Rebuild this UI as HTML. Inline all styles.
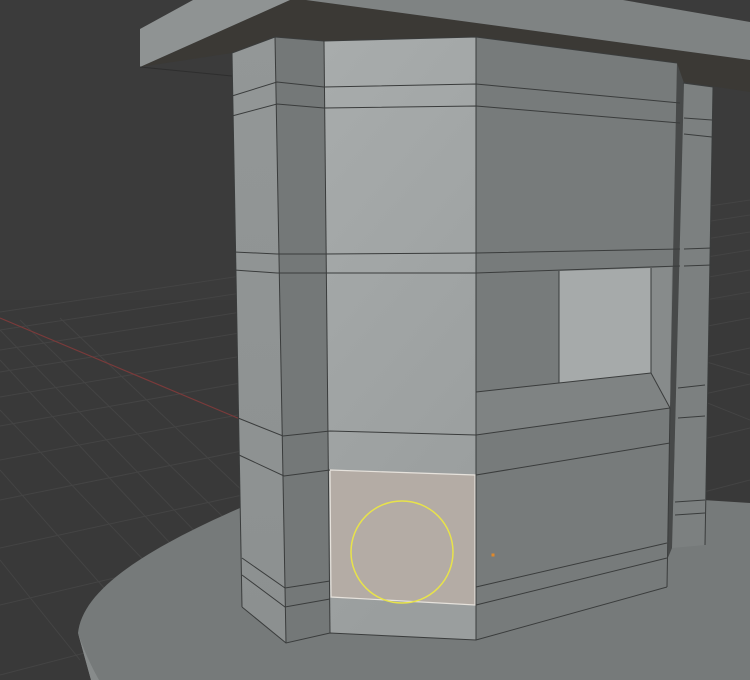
<!DOCTYPE html>
<html><head><meta charset="utf-8"><style>
html,body{margin:0;padding:0;background:#3b3b3b;width:750px;height:680px;overflow:hidden}
svg{display:block}
</style></head><body>
<svg width="750" height="680" viewBox="0 0 750 680" xmlns="http://www.w3.org/2000/svg">
<defs>
<linearGradient id="fr" x1="0" y1="0" x2="0.3" y2="1"><stop offset="0" stop-color="#a8acac"/><stop offset="1" stop-color="#9a9e9e"/></linearGradient>
<linearGradient id="lf" x1="0" y1="0" x2="0" y2="1"><stop offset="0" stop-color="#939797"/><stop offset="1" stop-color="#8c9090"/></linearGradient>
</defs>
<rect width="750" height="680" fill="#3b3b3b"/>
<rect x="0" y="300" width="750" height="380" fill="#393939"/>
<g stroke="#444444" stroke-width="1" fill="none">
<line x1="0" y1="312" x2="750" y2="200"/>
<line x1="0" y1="330" x2="750" y2="215"/>
<line x1="0" y1="350" x2="750" y2="232"/>
<line x1="0" y1="372" x2="750" y2="250"/>
<line x1="0" y1="397" x2="750" y2="270"/>
<line x1="0" y1="426" x2="750" y2="292"/>
<line x1="0" y1="460" x2="750" y2="318"/>
<line x1="0" y1="500" x2="750" y2="348"/>
<line x1="0" y1="548" x2="750" y2="384"/>
<line x1="0" y1="605" x2="750" y2="428"/>
<line x1="0" y1="675" x2="750" y2="480"/>
<line x1="0" y1="410" x2="220" y2="640"/>
<line x1="0" y1="360" x2="260" y2="640"/>
<line x1="0" y1="330" x2="300" y2="640"/>
<line x1="20" y1="320" x2="350" y2="640"/>
<line x1="60" y1="318" x2="400" y2="640"/>
<line x1="0" y1="470" x2="150" y2="640"/>
<line x1="0" y1="560" x2="80" y2="660"/>
<line x1="700" y1="400" x2="750" y2="420"/>
<line x1="700" y1="360" x2="750" y2="375"/>
</g>
<line x1="0" y1="318" x2="240" y2="419" stroke="#7a3a3a" stroke-width="1.2"/>
<!-- base disc -->
<path d="M78,633 C82,595 130,556 240,508 L703,500 L750,503 L750,680 L91,680 Z" fill="#767a7a"/>
<path d="M78,633 L91,680 L99,680 C88,660 82,645 78,633 Z" fill="#878b8b"/>
<!-- roof -->
<polygon points="140,67 290,0 306,0 750,60 750,92 684,82 232,53" fill="#3b3935"/>
<polygon points="140,29 193,0 290,0 140,67" fill="#8f9393"/>
<polygon points="306,0 623,0 750,22 750,60" fill="#7f8383"/>
<line x1="140" y1="67" x2="232" y2="76" stroke="#2e2e2e" stroke-width="1"/>
<!-- pillar right -->
<polygon points="683,83 713,87 705,545 672,548" fill="#7c8080"/>
<polygon points="677,63 684,83 672,548 667,560" fill="#474949"/>
<!-- tower faces -->
<polygon points="232,53 275,37 286,643 242,607" fill="url(#lf)"/>
<polygon points="275,37 324,41 330,633 286,643" fill="#747878"/>
<polygon points="324,41 476,37 476,640 330,633" fill="url(#fr)"/>
<polygon points="476,37 677,63 670,408 667,587 476,640" fill="#777b7b"/>
<!-- window -->
<polygon points="559,271 651,268 651,373 559,383" fill="#a6aaaa"/>
<polygon points="651,268 672,267 670,408 651,373" fill="#878b8b"/>
<polygon points="476,392 651,373 670,408 476,435" fill="#7f8383"/>
<!-- selected face -->
<polygon points="330,470 475,475 475,605 331,597" fill="#b4aca5" stroke="#e6e2dc" stroke-width="1.2"/>
<ellipse cx="402" cy="552" rx="51" ry="51" fill="none" stroke="#e8e34a" stroke-width="1.5"/>
<rect x="491.5" y="553.5" width="3" height="3" fill="#e0882a"/>
<!-- edges -->
<g stroke="#3a3c3c" stroke-width="1" fill="none">
<polyline points="232,53 275,37 324,41 476,37 677,63"/>
<line x1="232" y1="53" x2="242" y2="607"/>
<line x1="275" y1="37" x2="286" y2="643"/>
<line x1="324" y1="41" x2="330" y2="633"/>
<line x1="476" y1="37" x2="476" y2="640"/>
<polyline points="232,96 277,82 324,87 476,84 680,103"/>
<polyline points="232,116 277,104 324,108 476,106 680,123"/>
<polyline points="684,118 712,120"/>
<polyline points="684,134 712,137"/>
<polyline points="234,252 277,254 324,254 476,253 680,249"/>
<polyline points="234,270 277,273 324,273 476,273 680,266"/>
<polyline points="684,249 712,248"/>
<polyline points="684,266 712,265"/>
<polyline points="476,392 651,373"/>
<polyline points="476,435 670,408"/>
<polyline points="651,268 651,373 670,408"/>
<polyline points="559,271 559,383"/>
<polyline points="238,418 283,436 330,431 476,435"/>
<polyline points="239,455 284,476 330,470"/>
<polyline points="476,475 670,443"/>
<polyline points="242,558 285,588 330,581"/>
<polyline points="242,575 285,607 330,599"/>
<polyline points="476,587 667,543"/>
<polyline points="476,605 667,558"/>
<polyline points="242,607 286,643 330,633 476,640 667,587"/>
<line x1="670" y1="408" x2="667" y2="587"/>
<polyline points="678,388 705,385"/>
<polyline points="678,418 705,416"/>
<polyline points="675,502 705,500"/>
<polyline points="675,515 705,513"/>
<line x1="713" y1="87" x2="705" y2="545"/>
<polyline points="683,83 713,87"/>
</g>
</svg>
</body></html>
